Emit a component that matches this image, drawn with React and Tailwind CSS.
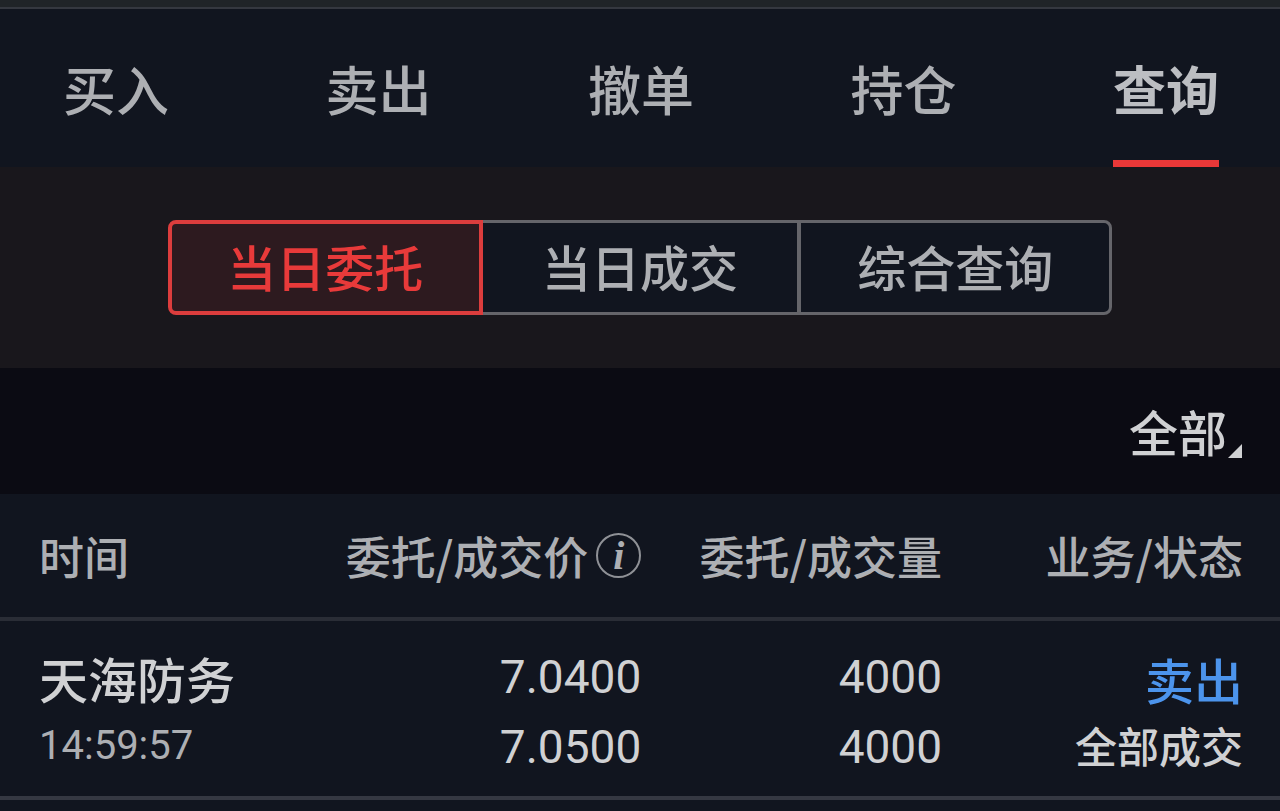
import { useState } from 'react';

const tabs = ['买入', '卖出', '撤单', '持仓', '查询'];

const segments = ['当日委托', '当日成交', '综合查询'];

const filters = ['全部', '买入', '卖出'];

const orders = [
    {
        id: '1',
        name: '天海防务',
        time: '14:59:57',
        orderPrice: '7.0400',
        dealPrice: '7.0500',
        orderAmount: '4000',
        dealAmount: '4000',
        side: '卖出',
        status: '全部成交'
    }
];

const segmentStyle = (index, active) => {
    const corners = index === 0 ? 'rounded-l-lg' : index === segments.length - 1 ? 'rounded-r-lg' : '';
    if (index === active) {
        return `${corners} border-4 border-[#dc3d3d] bg-[#2d1a1f] text-[#e83a3a]`;
    }
    const divider = index === 0 ? 'border-l-3' : index - 1 === active ? 'border-l-0' : 'border-l-4';
    const end = index === segments.length - 1 ? 'border-r-3' : 'border-r-0';
    return `${corners} ${divider} ${end} border-y-3 border-[#65656a] bg-[#11151f] text-[#adafb3]`;
};

const App = () => {
    const [activeTab, setActiveTab] = useState('查询');
    const [activeSegment, setActiveSegment] = useState(0);
    const [filter, setFilter] = useState('全部');

    return (
        <div className="min-h-screen bg-[#11151f] font-['Noto_Sans_CJK_SC',sans-serif] font-medium text-[#adafb3]">
            <div className="h-[9px] border-b-2 border-[#353840] bg-[#202428]" />

            {/* Trade tabs */}
            <nav className="flex justify-between pr-[61px] pl-[63px]">
                {tabs.map((tab) => (
                    <button
                        key={tab}
                        onClick={() => setActiveTab(tab)}
                        className={`border-b-[7px] pt-10 pb-8 text-[53px] leading-[79px] ${tab === activeTab
                            ? 'border-[#ea3838] font-bold text-[#bcbec2]'
                            : 'border-transparent'
                            }`}
                    >
                        {tab}
                    </button>
                ))}
            </nav>

            {/* Query type */}
            <div className="bg-[#19171c] py-[53px]">
                <div className="mx-auto grid h-[95px] w-[944px] max-w-full grid-cols-3">
                    {segments.map((segment, index) => (
                        <button
                            key={segment}
                            onClick={() => setActiveSegment(index)}
                            className={`pb-1 text-[49px] leading-none ${segmentStyle(index, activeSegment)}`}
                        >
                            {segment}
                        </button>
                    ))}
                </div>
            </div>

            {/* Filter */}
            <div className="flex h-[126px] items-center justify-end bg-[#0b0b13] px-[38px] text-[#d0d1d3]">
                <label className="flex items-end">
                    <select
                        aria-label="筛选"
                        value={filter}
                        onChange={(e) => setFilter(e.target.value)}
                        className="appearance-none bg-transparent text-[49px] leading-[70px] outline-none"
                    >
                        {filters.map((item) => (
                            <option key={item} value={item}>{item}</option>
                        ))}
                    </select>
                    <svg viewBox="0 0 14 14" className="mb-2 size-3.5" fill="currentColor">
                        <path d="M14 0V14H0Z" />
                    </svg>
                </label>
            </div>

            {/* Orders */}
            <table className="w-full table-fixed whitespace-nowrap text-right">
                <thead>
                    <tr className="h-[125px] border-b-4 border-[#2a2d36] text-[45px] leading-[66px]">
                        <th className="w-[26.5%] pl-[39px] text-left font-medium">时间</th>
                        <th className="w-[23.6%] font-medium">
                            <div className="flex items-center justify-end gap-2">
                                委托/成交价
                                <button
                                    aria-label="价格说明"
                                    className="size-[45px] rounded-full border-2 border-[#8f9196] text-center font-['Liberation_Serif',serif] text-[40px] leading-[40px] font-bold italic"
                                >
                                    i
                                </button>
                            </div>
                        </th>
                        <th className="w-[23.5%] font-medium">委托/成交量</th>
                        <th className="w-[26.4%] pr-[37px] font-medium">业务/状态</th>
                    </tr>
                </thead>
                <tbody>
                    {orders.map((order) => (
                        <tr key={order.id} className="h-[179px] border-b-4 border-[#353842] text-[#d0d1d3]">
                            <td className="pt-1.5 pl-[39px] text-left">
                                <div className="text-[49px] leading-[66px]">{order.name}</div>
                                <div className="mt-0.5 font-[Roboto,sans-serif] text-[40px] leading-[66px] font-normal text-[#adafb3]">{order.time}</div>
                            </td>
                            <td className="pt-1.5 font-[Roboto,sans-serif] text-[46px] leading-[70px] font-normal">
                                <div>{order.orderPrice}</div>
                                <div>{order.dealPrice}</div>
                            </td>
                            <td className="pt-1.5 font-[Roboto,sans-serif] text-[46px] leading-[70px] font-normal">
                                <div>{order.orderAmount}</div>
                                <div>{order.dealAmount}</div>
                            </td>
                            <td className="pt-1.5 pr-[37px]">
                                <div className="text-[49px] leading-[66px] text-[#4c94ec]">{order.side}</div>
                                <div className="text-[42px] leading-[66px]">{order.status}</div>
                            </td>
                        </tr>
                    ))}
                </tbody>
            </table>
        </div>
    );
};

export default App;
